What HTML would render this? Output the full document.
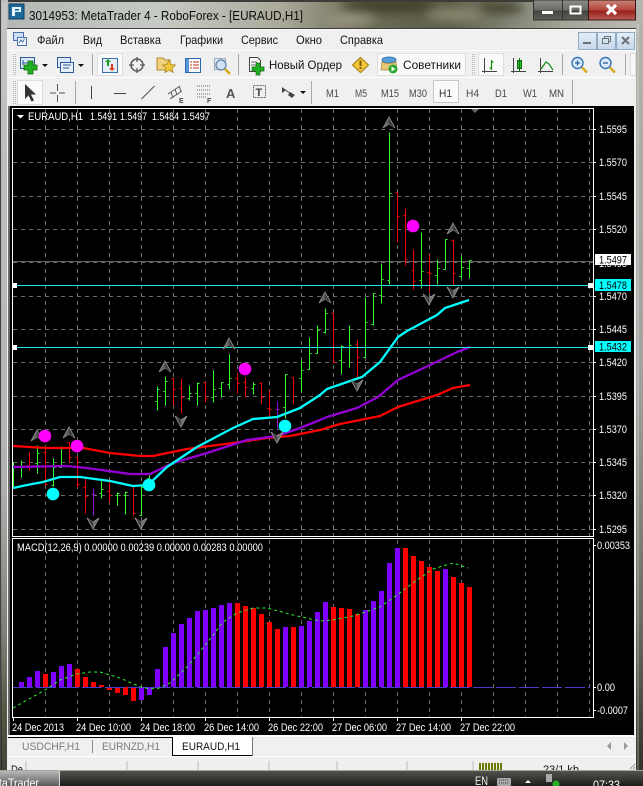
<!DOCTYPE html>
<html><head><meta charset="utf-8"><title>MetaTrader 4</title>
<style>
html,body{margin:0;padding:0;background:#000;width:643px;height:786px;overflow:hidden}
svg{display:block}
text{font-family:"Liberation Sans","Noto Sans CJK SC",sans-serif;font-size:11px}
.w{fill:#fff}
.m{font-size:12px;fill:#111}
.c{shape-rendering:crispEdges}
</style></head><body>
<svg width="643" height="786" viewBox="0 0 643 786" xmlns="http://www.w3.org/2000/svg">
<defs>
<linearGradient id="gt" x1="0" x2="1" y1="0" y2="0">
<stop offset="0" stop-color="#b4b8b4"/><stop offset=".25" stop-color="#c6cac4"/><stop offset=".44" stop-color="#aaa99a"/><stop offset=".56" stop-color="#6e6d56"/><stop offset=".7" stop-color="#5c5c48"/><stop offset=".8" stop-color="#87877a"/><stop offset=".88" stop-color="#a5a598"/><stop offset="1" stop-color="#bdbdb8"/>
</linearGradient>
<linearGradient id="gl" x1="0" x2="0" y1="0" y2="1">
<stop offset="0" stop-color="#bdbdbd"/><stop offset=".62" stop-color="#a8a8a8"/><stop offset=".82" stop-color="#707068"/><stop offset=".93" stop-color="#3e3e2c"/><stop offset="1" stop-color="#2a2a20"/>
</linearGradient>
<linearGradient id="gr" x1="0" x2="0" y1="0" y2="1">
<stop offset="0" stop-color="#b4b4ae"/><stop offset=".5" stop-color="#a0a09c"/><stop offset=".8" stop-color="#6c6c64"/><stop offset="1" stop-color="#33332c"/>
</linearGradient>
<linearGradient id="gb" x1="0" x2="0" y1="0" y2="1">
<stop offset="0" stop-color="#8d8d88"/><stop offset=".5" stop-color="#6a6a66"/><stop offset=".55" stop-color="#45453f"/><stop offset="1" stop-color="#5f5f58"/>
</linearGradient>
<linearGradient id="gc" x1="0" x2="0" y1="0" y2="1">
<stop offset="0" stop-color="#c8857a"/><stop offset=".5" stop-color="#b5443a"/><stop offset=".55" stop-color="#98201a"/><stop offset="1" stop-color="#b86058"/>
</linearGradient>
<linearGradient id="gk" x1="0" x2="0" y1="0" y2="1">
<stop offset="0" stop-color="#55554f"/><stop offset=".5" stop-color="#3a3a36"/><stop offset="1" stop-color="#1c1c1a"/>
</linearGradient>
<linearGradient id="gkb" x1="0" x2="0" y1="0" y2="1">
<stop offset="0" stop-color="#b8b8b8"/><stop offset=".5" stop-color="#8a8a8a"/><stop offset="1" stop-color="#5a5a5a"/>
</linearGradient>
<linearGradient id="gm" x1="0" x2="0" y1="0" y2="1">
<stop offset="0" stop-color="#e4eef8"/><stop offset="1" stop-color="#c6d8ea"/>
</linearGradient>
<filter id="bl"><feGaussianBlur stdDeviation="5"/></filter>
<g id="up"><path d="M0-6L6 5 0 1-6 5Z" fill="#5c5c5c" stroke="#8c8c8c" stroke-width=".8"/><path d="M0-5L0 1 5 4.6Z" fill="#3c3c3c"/></g>
<g id="dn"><path d="M0 6L6-5 0-1-6-5Z" fill="#6c6c6c" stroke="#939393" stroke-width=".8"/><path d="M0 5L0-1-5-4.6Z" fill="#3c3c3c"/></g>
<g id="dd"><path d="M0 0h6l-3 3z" fill="#111"/></g>
</defs>

<!-- glass frame -->
<rect width="643" height="28" fill="url(#gt)"/>
<g filter="url(#bl)"><ellipse cx="390" cy="6" rx="50" ry="7" fill="#3f3f2c"/><ellipse cx="455" cy="15" rx="28" ry="6" fill="#8d8a70"/><ellipse cx="350" cy="20" rx="24" ry="5" fill="#9c9a84"/><ellipse cx="500" cy="8" rx="24" ry="6" fill="#45452f"/></g>
<rect width="643" height="2" fill="#3c3c38"/>
<rect y="0" width="8" height="770" fill="url(#gl)"/>
<rect x="636" width="7" height="770" fill="url(#gr)"/>
<rect x="0" width="1" height="770" fill="#444"/>
<rect x="2" y="2" width="5" height="768" fill="#fff" opacity=".12"/>
<rect x="637" y="24" width="2" height="746" fill="#fff" opacity=".22"/>

<!-- title -->
<rect x="9" y="4" width="15" height="15" fill="#1c6a9c" stroke="#0f3d60" class="c"/>
<path d="M12 7h9v5h-6v4h-3zM15 9v1.500h4V9z" fill="#e8f4fb" fill-rule="evenodd"/>
<text x="29" y="20" textLength="274" lengthAdjust="spacingAndGlyphs" style="font-size:13px" fill="#0c0c0c">3014953: MetaTrader 4 - RoboForex - [EURAUD,H1]</text>

<!-- caption buttons -->
<rect x="533.5" y="0" width="29" height="20" fill="url(#gb)" stroke="#333" class="c"/>
<rect x="562.5" y="0" width="26" height="20" fill="url(#gb)" stroke="#333" class="c"/>
<rect x="588.5" y="0" width="47" height="20" fill="url(#gc)" stroke="#3a1512" class="c"/>
<rect x="542" y="11" width="11" height="3" fill="#fff"/>
<rect x="570.5" y="6.5" width="10" height="7" fill="none" stroke="#fff" stroke-width="2" class="c"/>
<path d="M607 5l9 9M616 5l-9 9" stroke="#fff" stroke-width="3.2"/>

<!-- client -->
<rect x="7" y="28" width="629" height="742" fill="#f0f0f0"/>
<rect x="7" y="28" width="629" height="1" fill="#3c3c3c"/>
<rect x="7" y="29" width="629" height="1" fill="#fafafa"/>
<rect x="8" y="50" width="627" height="1" fill="#fdfdfd"/>
<rect x="8" y="77" width="627" height="1" fill="#fff"/>

<!-- menu icon -->
<rect x="13.5" y="32.5" width="10" height="8" fill="#cfe0f6" stroke="#4d6fa8" class="c"/>
<rect x="17.5" y="37.5" width="9" height="8" fill="#eaf2fc" stroke="#4d6fa8" class="c"/>
<path d="M19 43l2-3 1.500 2 2-3" stroke="#4d6fa8" fill="none"/>
<text x="37" y="44" textLength="27" lengthAdjust="spacingAndGlyphs" class="m">Файл</text>
<text x="83" y="44" textLength="19" lengthAdjust="spacingAndGlyphs" class="m">Вид</text>
<text x="120" y="44" textLength="41" lengthAdjust="spacingAndGlyphs" class="m">Вставка</text>
<text x="180" y="44" textLength="43" lengthAdjust="spacingAndGlyphs" class="m">Графики</text>
<text x="241" y="44" textLength="37" lengthAdjust="spacingAndGlyphs" class="m">Сервис</text>
<text x="296" y="44" textLength="26" lengthAdjust="spacingAndGlyphs" class="m">Окно</text>
<text x="340" y="44" textLength="43" lengthAdjust="spacingAndGlyphs" class="m">Справка</text>

<!-- MDI buttons -->
<rect x="578.5" y="32.500" width="18" height="17" fill="url(#gm)" stroke="#93a9c0" class="c"/>
<rect x="597.5" y="32.500" width="18" height="17" fill="url(#gm)" stroke="#93a9c0" class="c"/>
<rect x="616.5" y="32.500" width="18" height="17" fill="url(#gm)" stroke="#93a9c0" class="c"/>
<rect x="583" y="42" width="8" height="2" fill="#6a7078"/>
<path d="M604.500 38.500v-2h6v5h-2M602.500 38.500h6v5h-6z" fill="none" stroke="#6a7078" stroke-width="1.200" class="c"/>
<path d="M622 37l7 7M629 37l-7 7" stroke="#6a7078" stroke-width="2"/>

<!-- toolbar 1 -->
<path d="M13.500 54v21M15.500 54v21" stroke="#b5b5b5" stroke-dasharray="1 1" class="c"/>
<rect x="20.500" y="57.500" width="14" height="11" fill="#dbe8f8" stroke="#2c5a96" stroke-width="1.300" class="c"/>
<path d="M23 60v5M23 63h6" stroke="#2c5a96" fill="none"/>
<path d="M28 61h5v4h4v5h-4v4h-5v-4h-4v-5h4z" fill="#22b022" stroke="#0d6a0d" stroke-width=".8"/>
<use href="#dd" x="42" y="64"/>
<rect x="57.500" y="57.500" width="13" height="10" fill="#dbe8f8" stroke="#2c5a96" stroke-width="1.300" class="c"/>
<rect x="60.500" y="62.500" width="13" height="10" fill="#e8f0fa" stroke="#2c5a96" stroke-width="1.300" class="c"/>
<path d="M63 65h8M63 68h6" stroke="#2c5a96"/>
<use href="#dd" x="78" y="64"/>
<rect x="92" y="54" width="1" height="21" fill="#a8a8a8"/>
<rect x="97.500" y="53.500" width="25" height="22" fill="#fafafa" stroke="#dedede" class="c"/>
<rect x="102.500" y="58.500" width="15" height="14" fill="#e4eef8" stroke="#3a6ea8" class="c"/>
<path d="M107 66v-4h-2l3-3 3 3h-2v4z" fill="#1f9c1f"/>
<path d="M111 64v4h-2l3 3 3-3h-2v-4z" fill="#d83b1e"/>
<circle cx="137" cy="65" r="6" fill="none" stroke="#5a5a5a" stroke-width="1.500"/>
<path d="M137 57v5M137 68v5M129 65h5M140 65h5" stroke="#5a5a5a" stroke-width="1.300"/>
<path d="M157 58h6l2 2h5v10h-13z" fill="#f2d27a" stroke="#b08a32"/>
<path d="M169 60l2 4.500 4.500.5-3.400 3 1 4.500-4.100-2.400-4.100 2.400 1-4.500-3.400-3 4.500-.5z" fill="#f0c838" stroke="#a8851e" stroke-width=".8"/>
<rect x="185.500" y="58.500" width="15" height="14" fill="#fff" stroke="#2c68b0" stroke-width="1.200" class="c"/>
<rect x="186" y="59" width="3" height="13" fill="#5c94d8"/>
<path d="M190 62h2M193 62h6M190 65h2M193 65h6M190 68h2M193 68h6" stroke="#c03020" stroke-width="1"/>
<rect x="214.500" y="58.500" width="11" height="11" fill="#e6eef8" stroke="#97a9bd" class="c"/>
<circle cx="221" cy="65" r="5" fill="#cfe2f6" stroke="#6f8ca8" stroke-width="1.400"/>
<path d="M225 69l5 5" stroke="#d8a818" stroke-width="2.400"/>
<rect x="238" y="54" width="1" height="21" fill="#a8a8a8"/>
<path d="M249.500 57.500h8l3 3v11h-11z" fill="#fff" stroke="#444"/>
<path d="M251 62h6M251 65h5" stroke="#666"/>
<path d="M256 63h4v4h4v4h-4v4h-4v-4h-4v-4h4z" fill="#22b022" stroke="#0d6a0d" stroke-width=".7"/>
<text x="269" y="69" textLength="73" lengthAdjust="spacingAndGlyphs" style="font-size:12px" fill="#111">Новый Ордер</text>
<path d="M360.500 57.500l8 7.500-8 7.500-8-7.500z" fill="#f4c838" stroke="#b08a20" stroke-width="1.200"/>
<rect x="359.500" y="60.500" width="2" height="5.500" fill="#7a5a10"/><rect x="359.500" y="67" width="2" height="2" fill="#7a5a10"/>
<rect x="377.500" y="53.500" width="88" height="22" fill="#fafafa" stroke="#dedede" class="c"/>
<ellipse cx="389" cy="60" rx="7" ry="3" fill="#5aa0d8" stroke="#3a78ac"/>
<path d="M382 62q7 3 14 0l1 8h-16z" fill="#e6c77a" stroke="#a68b4a" stroke-width=".8"/>
<circle cx="393" cy="69" r="4.500" fill="#2ea82e"/><path d="M391.500 66.500l4 2.500-4 2.500z" fill="#fff"/>
<text x="403" y="69" textLength="58" lengthAdjust="spacingAndGlyphs" style="font-size:12px" fill="#111">Советники</text>
<path d="M472.500 54v21M474.500 54v21" stroke="#b5b5b5" stroke-dasharray="1 1" class="c"/>
<rect x="478.500" y="53.500" width="25" height="22" fill="#fafafa" stroke="#dedede" class="c"/>
<path d="M484.500 58v15M482 71.500h15" stroke="#444" fill="none"/>
<path d="M491.500 60v10M489.500 68h2M491.500 62h2" stroke="#0f8a0f" stroke-width="1.200" fill="none"/>
<path d="M513.500 58v15M511 71.500h15" stroke="#444" fill="none"/>
<rect x="517.500" y="60.500" width="4" height="8" fill="#2ac42a" stroke="#0d6a0d" class="c"/><path d="M519.500 58v14" stroke="#0d6a0d"/>
<path d="M540.500 58v15M538 71.500h15" stroke="#444" fill="none"/>
<path d="M541 69l5-7 3 2 4 6" stroke="#0f8a0f" fill="none" stroke-width="1.200"/>
<rect x="562" y="54" width="1" height="21" fill="#a8a8a8"/>
<circle cx="577.500" cy="63" r="5.500" fill="#dbeafa" stroke="#3874b4" stroke-width="1.400"/><path d="M575 63h5M577.500 60.500v5" stroke="#2060a0" stroke-width="1.300"/><path d="M582 67.500l5 5" stroke="#d8a818" stroke-width="2.400"/>
<circle cx="605.500" cy="63" r="5.500" fill="#dbeafa" stroke="#3874b4" stroke-width="1.400"/><path d="M603 63h5" stroke="#2060a0" stroke-width="1.300"/><path d="M610 67.500l5 5" stroke="#d8a818" stroke-width="2.400"/>
<rect x="625" y="54" width="1" height="21" fill="#a8a8a8"/>
<rect x="630.500" y="53.500" width="5" height="22" fill="#f8f8f8" stroke="#dedede" class="c"/>

<!-- toolbar 2 -->
<path d="M13.500 81v24M15.500 81v24" stroke="#b5b5b5" stroke-dasharray="1 1" class="c"/>
<rect x="17.500" y="80.500" width="25" height="24" fill="#fafafa" stroke="#dedede" class="c"/>
<path d="M25 84v15l3.500-3.500 3 6 2.500-1-3-6h5z" fill="#333"/>
<path d="M57.500 84v7M57.500 95v7M50 93h6M59 93h6" stroke="#555" class="c"/>
<rect x="75" y="81" width="1" height="23" fill="#a8a8a8"/>
<rect x="91" y="86" width="1" height="13" fill="#444"/>
<rect x="114" y="93" width="12" height="1" fill="#444"/>
<path d="M141.500 99l13-13" stroke="#555" stroke-width="1.100"/>
<path d="M168 94l12-8M170 99l12-8M173 98l-2-6M177 95l-2-6M181 92l-1.500-5" stroke="#555"/>
<text x="179" y="103" style="font-size:7px;font-weight:bold" fill="#444">E</text>
<path d="M197 86h14M197 90h14M197 94h14M197 97h10" stroke="#666" stroke-dasharray="1 1"/>
<text x="207" y="103" style="font-size:7px;font-weight:bold" fill="#444">F</text>
<text x="226" y="98" style="font-size:13px;font-weight:bold" fill="#555">A</text>
<rect x="253.500" y="85.500" width="12" height="12" fill="none" stroke="#666" stroke-dasharray="2 1" class="c"/>
<text x="255.500" y="96" style="font-size:11px;font-weight:bold" fill="#444">T</text>
<path d="M282 87l4 3-4 3zM290 92l5 3-3 3-4-3z" fill="#444"/>
<path d="M285 90l5 3" stroke="#444"/>
<use href="#dd" x="300" y="91"/>
<rect x="311" y="81" width="1" height="23" fill="#a8a8a8"/>
<text x="326" y="97" textLength="13" lengthAdjust="spacingAndGlyphs" fill="#4a4a4a">M1</text>
<text x="355" y="97" textLength="12" lengthAdjust="spacingAndGlyphs" fill="#4a4a4a">M5</text>
<text x="381" y="97" textLength="18" lengthAdjust="spacingAndGlyphs" fill="#4a4a4a">M15</text>
<text x="409" y="97" textLength="18" lengthAdjust="spacingAndGlyphs" fill="#4a4a4a">M30</text>
<rect x="433.500" y="80.500" width="25" height="22" fill="#fafafa" stroke="#c8c8c8" class="c"/>
<text x="439" y="97" textLength="13" lengthAdjust="spacingAndGlyphs" fill="#333">H1</text>
<text x="466" y="97" textLength="13" lengthAdjust="spacingAndGlyphs" fill="#4a4a4a">H4</text>
<text x="495" y="97" textLength="12" lengthAdjust="spacingAndGlyphs" fill="#4a4a4a">D1</text>
<text x="523" y="97" textLength="14" lengthAdjust="spacingAndGlyphs" fill="#4a4a4a">W1</text>
<text x="549" y="97" textLength="15" lengthAdjust="spacingAndGlyphs" fill="#4a4a4a">MN</text>
<rect x="572" y="80" width="1" height="24" fill="#a8a8a8"/>

<!-- chart area -->
<rect x="10" y="106" width="624" height="629" fill="#000"/>
<rect x="8" y="106" width="2" height="630" fill="#6c6c6c"/>
<path d="M45.500 109V536M77.500 109V536M109.500 109V536M141.500 109V536M173.500 109V536M205.500 109V536M237.500 109V536M269.500 109V536M301.500 109V536M333.500 109V536M365.500 109V536M397.500 109V536M429.500 109V536M461.500 109V536M493.500 109V536M525.500 109V536M557.500 109V536M589.500 109V536M45.500 540V717M77.500 540V717M109.500 540V717M141.500 540V717M173.500 540V717M205.500 540V717M237.500 540V717M269.500 540V717M301.500 540V717M333.500 540V717M365.500 540V717M397.500 540V717M429.500 540V717M461.500 540V717M493.500 540V717M525.500 540V717M557.500 540V717M589.500 540V717" stroke="#6c6c6c" stroke-dasharray="4 4" class="c"/>
<path d="M13 129.500H593M13 162.500H593M13 196.500H593M13 229.500H593M13 262.500H593M13 296.500H593M13 329.500H593M13 362.500H593M13 396.500H593M13 429.500H593M13 462.500H593M13 495.500H593M13 529.500H593" stroke="#6c6c6c" stroke-dasharray="4 4" class="c"/>
<rect x="12.500" y="108.500" width="581" height="428" fill="none" stroke="#fff" class="c"/>
<rect x="12.500" y="538.500" width="581" height="179" fill="none" stroke="#fff" class="c"/>
<path d="M593 129.500h3M593 162.500h3M593 196.500h3M593 229.500h3M593 296.500h3M593 329.500h3M593 362.500h3M593 396.500h3M593 429.500h3M593 462.500h3M593 495.500h3M593 529.500h3M593 545.500h3M593 687.500h3M593 710.500h3M13.500 717v4M77.500 717v4M141.500 717v4M205.500 717v4M269.500 717v4M333.500 717v4M397.500 717v4M461.500 717v4" stroke="#fff" class="c"/>

<!-- h lines -->
<rect x="13" y="261" width="580" height="1" fill="#606060"/>

<!-- OHLC bars -->
<g transform="translate(.5 .5)" class="c" fill="none">
<path stroke="#30ff30" d="M13 462V488M13 467h2
M21 460V477M19 466h2M21 466h2
M37 445V473M35 463h2M37 453h2
M53 458V486M51 485h2M53 467h2
M61 446V467M59 467h2M61 447h2
M101 478V498M99 493h2M101 489h2
M117 492V505M115 495h2M117 493h2
M125 491V514M123 495h2M125 492h2
M141 486V515M139 515h2M141 487h2
M149 473V478M147 478h2M149 474h2
M157 386V410M155 401h2M157 389h2
M165 376V405M163 391h2M165 381h2
M189 385V400M187 398h2M189 393h2
M197 382V405M195 393h2M197 383h2
M213 370V402M211 397h2M213 389h2
M221 382V397M219 388h2M221 382h2
M229 354V389M227 384h2M229 378h2
M253 382V394M251 388h2M253 384h2
M285 374V418M283 407h2M285 374h2
M301 360V392M299 378h2M301 370h2
M309 337V369M307 369h2M309 353h2
M317 325V353M315 353h2M317 330h2
M325 308V333M323 332h2M325 313h2
M341 345V374M339 360h2M341 346h2
M349 325V367M347 347h2M349 345h2
M365 297V357M363 357h2M365 322h2
M373 293V325M371 324h2M373 293h2
M381 263V303M379 295h2M381 279h2
M389 132V284M387 280h2M389 193h2
M421 232V288M419 280h2M421 271h2
M437 259V284M435 275h2M437 268h2
M445 239V269M443 269h2M445 239h2
M461 256V278M459 276h2M461 267h2
M469 260V278M467 268h2M469 260h2"/>
<path stroke="#ff0000" d="M29 452V470M27 465h2M29 466h2
M45 447V485M43 452h2M45 484h2
M69 442V462M67 442h2M69 457h2
M77 457V487M75 457h2M77 484h2
M85 477V513M83 487h2M85 496h2
M109 481V502M107 491h2M109 495h2
M133 485V515M131 486h2M133 513h2
M173 378V405M171 378h2M173 389h2
M181 378V413M179 388h2M181 397h2
M205 382V402M203 382h2M205 398h2
M237 373V393M235 378h2M237 383h2
M245 377V397M243 382h2M245 387h2
M261 382V403M259 383h2M261 397h2
M269 390V417M267 408h2M269 409h2
M293 377V403M291 377h2
M333 313V362M331 313h2M333 362h2
M357 340V377M355 344h2M357 357h2
M397 192V242M395 192h2M397 216h2
M405 208V265M403 215h2M405 259h2
M413 249V289M411 270h2M413 281h2
M429 254V292M427 272h2M429 273h2
M453 239V285M451 240h2M453 273h2"/>
<path stroke="#9010d8" d="M93 488V515M91 494h4M277 401V428M275 409h4"/>
</g>

<!-- moving averages -->
<g fill="none" stroke-width="2.300" stroke-linejoin="round">
<polyline stroke="#ff0000" points="13,446 47,448 83,448 110,453 140,456 153,456 187,449 233,443 267,438 290,436 320,430 340,424 380,416 398,407 437,395 453,388 470,385"/>
<polyline stroke="#9400d3" points="13,467 67,466 87,468 130,474 150,474 173,463 207,453 247,440 277,436 300,428 320,420 327,417 357,408 378,397 398,380 430,365 457,352 470,347"/>
<polyline stroke="#00ffff" points="13,488 27,485 43,482 60,477 80,477 110,481 133,486 148,485 167,467 197,447 233,428 253,419 277,417 300,408 320,395 327,389 350,381 362,377 380,362 398,337 407,331 437,315 445,308 469,300"/>
</g>

<!-- level lines -->
<rect x="13" y="285" width="577" height="1" fill="#1fe8e8"/>
<rect x="13" y="347" width="577" height="1" fill="#1fe8e8"/>
<path d="M13 283h4v5h-4zM588 283h5v5h-5zM13 345h4v5h-4zM588 345h5v5h-5z" fill="#fff"/>

<!-- arrows -->
<use href="#up" x="389" y="123"/><use href="#up" x="453" y="229"/><use href="#up" x="325" y="298"/><use href="#up" x="165" y="367"/><use href="#up" x="229" y="344"/><use href="#up" x="69" y="433"/><use href="#up" x="37" y="436"/>
<path d="M471 109h8l-4 4z" fill="#666"/>
<use href="#dn" x="181" y="421"/><use href="#dn" x="93" y="523"/><use href="#dn" x="141" y="523"/><use href="#dn" x="277" y="437"/><use href="#dn" x="357" y="385"/><use href="#dn" x="429" y="299"/><use href="#dn" x="453" y="292"/>

<!-- dots -->
<g fill="#ff00ff"><circle cx="45" cy="436" r="6.300"/><circle cx="77" cy="446" r="6.300"/><circle cx="245" cy="369" r="6.300"/><circle cx="413" cy="226" r="6.300"/></g>
<g fill="#00ffff"><circle cx="53" cy="494" r="6.300"/><circle cx="149" cy="485" r="6.300"/><circle cx="285" cy="426" r="6.300"/></g>

<!-- MACD -->
<path class="c" stroke="#8000ff" stroke-width="5" fill="none" d="M21.500 687V682M29.500 687V677M37.500 687V671M53.500 687V672M61.500 687V666M69.500 687V664M141.500 687V700M149.500 687V695M157.500 687V669M165.500 687V647M173.500 687V633M181.500 687V624M189.500 687V618M197.500 687V611M205.500 687V610M213.500 687V608M221.500 687V605M229.500 687V603M285.500 687V627M301.500 687V626M309.500 687V621M317.500 687V612M325.500 687V602M365.500 687V610M373.500 687V601M381.500 687V591M389.500 687V563M397.500 687V548M445.500 687V569"/>
<path class="c" stroke="#ff0000" stroke-width="5" fill="none" d="M45.500 687V674M77.500 687V669M85.500 687V677M93.500 687V682M101.500 687V685M109.500 687V690M117.500 687V693M125.500 687V695M133.500 687V701M237.500 687V603M245.500 687V606M253.500 687V608M261.500 687V614M269.500 687V622M277.500 687V629M293.500 687V627M333.500 687V607M341.500 687V608M349.500 687V609M357.500 687V614M405.500 687V548M413.500 687V556M421.500 687V561M429.500 687V567M437.500 687V571M453.500 687V577M461.500 687V583M469.500 687V587"/>
<path stroke="#4a3cc8" stroke-dasharray="20 3" d="M13 687.500H590" class="c"/>
<polyline fill="none" stroke="#30f030" stroke-dasharray="3 3" points="13,708 45,690 60,680 77,674 90,672 100,672 120,678 143,688 157,689 170,683 187,667 207,643 223,622 237,613 253,608 267,608 293,615 320,621 333,620 353,616 380,607 397,595 417,580 433,569 453,563 468,568"/>

<!-- chart text -->
<path d="M17 115h7l-3.500 3.500z" fill="#fff"/>
<text x="28" y="120" textLength="55" lengthAdjust="spacingAndGlyphs" class="w">EURAUD,H1</text>
<text x="90" y="120" textLength="27" lengthAdjust="spacingAndGlyphs" class="w">1.5491</text>
<text x="120" y="120" textLength="27" lengthAdjust="spacingAndGlyphs" class="w">1.5497</text>
<text x="152" y="120" textLength="27" lengthAdjust="spacingAndGlyphs" class="w">1.5484</text>
<text x="182" y="120" textLength="28" lengthAdjust="spacingAndGlyphs" class="w">1.5497</text>
<text x="17" y="551" textLength="246" lengthAdjust="spacingAndGlyphs" class="w">MACD(12,26,9) 0.00000 0.00239 0.00000 0.00283 0.00000</text>

<g class="w">
<text x="599" y="133" textLength="28" lengthAdjust="spacingAndGlyphs">1.5595</text>
<text x="599" y="166" textLength="28" lengthAdjust="spacingAndGlyphs">1.5570</text>
<text x="599" y="200" textLength="28" lengthAdjust="spacingAndGlyphs">1.5545</text>
<text x="599" y="233" textLength="28" lengthAdjust="spacingAndGlyphs">1.5520</text>
<text x="599" y="267" textLength="28" lengthAdjust="spacingAndGlyphs">1.5495</text>
<text x="599" y="300" textLength="28" lengthAdjust="spacingAndGlyphs">1.5470</text>
<text x="599" y="333" textLength="28" lengthAdjust="spacingAndGlyphs">1.5445</text>
<text x="599" y="366" textLength="28" lengthAdjust="spacingAndGlyphs">1.5420</text>
<text x="599" y="400" textLength="28" lengthAdjust="spacingAndGlyphs">1.5395</text>
<text x="599" y="433" textLength="28" lengthAdjust="spacingAndGlyphs">1.5370</text>
<text x="599" y="466" textLength="28" lengthAdjust="spacingAndGlyphs">1.5345</text>
<text x="599" y="499" textLength="28" lengthAdjust="spacingAndGlyphs">1.5320</text>
<text x="599" y="533" textLength="28" lengthAdjust="spacingAndGlyphs">1.5295</text>
<text x="597" y="549" textLength="33" lengthAdjust="spacingAndGlyphs">0.00353</text>
<text x="597" y="691" textLength="18" lengthAdjust="spacingAndGlyphs">0.00</text>
<text x="597" y="714" textLength="31" lengthAdjust="spacingAndGlyphs">-0.0007</text>
<text x="12" y="731" textLength="52" lengthAdjust="spacingAndGlyphs">24 Dec 2013</text>
<text x="76" y="731" textLength="55" lengthAdjust="spacingAndGlyphs">24 Dec 10:00</text>
<text x="140" y="731" textLength="55" lengthAdjust="spacingAndGlyphs">24 Dec 18:00</text>
<text x="204" y="731" textLength="55" lengthAdjust="spacingAndGlyphs">26 Dec 14:00</text>
<text x="268" y="731" textLength="55" lengthAdjust="spacingAndGlyphs">26 Dec 22:00</text>
<text x="332" y="731" textLength="55" lengthAdjust="spacingAndGlyphs">27 Dec 06:00</text>
<text x="396" y="731" textLength="55" lengthAdjust="spacingAndGlyphs">27 Dec 14:00</text>
<text x="460" y="731" textLength="55" lengthAdjust="spacingAndGlyphs">27 Dec 22:00</text>
</g>
<rect x="595" y="254" width="36" height="11" fill="#fff"/>
<text x="599" y="263.500" textLength="28" lengthAdjust="spacingAndGlyphs" fill="#000">1.5497</text>
<rect x="595" y="279" width="36" height="12" fill="#00ffff"/>
<text x="599" y="289" textLength="28" lengthAdjust="spacingAndGlyphs" fill="#000">1.5478</text>
<rect x="595" y="341" width="36" height="11" fill="#00ffff"/>
<text x="599" y="350.500" textLength="28" lengthAdjust="spacingAndGlyphs" fill="#000">1.5432</text>

<!-- tabs -->
<rect x="8" y="735" width="628" height="2" fill="#fff"/>
<rect x="8" y="737" width="164" height="1" fill="#000"/>
<rect x="252" y="737" width="384" height="1" fill="#e8e8e8"/>
<rect x="8" y="738" width="628" height="18" fill="#f0f0f0"/>
<rect x="172" y="737" width="80" height="18" fill="#fff"/>
<path d="M172.500 737v18.500H252" stroke="#000" fill="none" class="c"/>
<path d="M252.500 737v19" stroke="#777" class="c"/>
<rect x="92" y="740" width="1" height="13" fill="#8a8a8a"/>
<text x="22" y="750" textLength="58" lengthAdjust="spacingAndGlyphs" fill="#7c7c7c">USDCHF,H1</text>
<text x="102" y="750" textLength="58" lengthAdjust="spacingAndGlyphs" fill="#7c7c7c">EURNZD,H1</text>
<text x="182" y="750" textLength="58" lengthAdjust="spacingAndGlyphs" fill="#111">EURAUD,H1</text>
<path d="M611 742l-4 4 4 4zM624 742l4 4-4 4z" fill="#9a9a9a"/>

<!-- status bar -->
<rect x="8" y="756" width="628" height="1" fill="#fff"/>
<rect x="8" y="757" width="628" height="13" fill="#efefef"/>
<path d="M26 761v9M127 761v9M198 761v9M269 761v9M337 761v9M407 761v9M473 761v9" stroke="#bdbdbd" class="c"/>
<text x="11" y="773" textLength="12" lengthAdjust="spacingAndGlyphs" fill="#111">De</text>
<path d="M480 763v7M483 763v7M486 763v7M489 763v7M492 763v7M495 763v7M498 763v7M501 763v7" stroke="#6d7a00" stroke-width="2" class="c"/>
<text x="543" y="773" textLength="36" lengthAdjust="spacingAndGlyphs" fill="#111">23/1 kb</text>
<path d="M630 769l5-5M633 769l2-2" stroke="#9a9a9a"/>

<!-- taskbar -->
<rect y="770" width="643" height="16" fill="url(#gk)"/>
<rect y="770" width="643" height="1" fill="#a4a49e"/>
<rect x="0" y="771" width="59" height="15" fill="url(#gkb)"/>
<rect x="59" y="770" width="1" height="16" fill="#d8d8d8"/>
<text x="-16" y="787" style="font-size:12px" fill="#fff" textLength="55" lengthAdjust="spacingAndGlyphs">MetaTrader</text>
<text x="475" y="785" style="font-size:12px" fill="#eee" textLength="13" lengthAdjust="spacingAndGlyphs">EN</text>
<rect x="497" y="778" width="14" height="8" rx="1" fill="#a8a8a8"/><path d="M499 780h10M499 783h10" stroke="#444" stroke-dasharray="1 1"/>
<path d="M525 783l3-3 3 3z" fill="#fff"/>
<rect x="546" y="774" width="6" height="8" fill="#aaa"/><circle cx="556" cy="784" r="3.500" fill="#25b025"/>
<text x="593" y="789" style="font-size:12px" fill="#fff" textLength="27" lengthAdjust="spacingAndGlyphs">07:33</text>
</svg>
</body></html>
